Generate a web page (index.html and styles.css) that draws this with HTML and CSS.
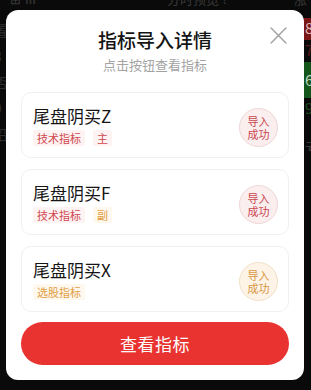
FILE: index.html
```html
<!DOCTYPE html>
<html lang="zh-CN">
<head>
<meta charset="utf-8">
<title>指标导入详情</title>
<link rel="stylesheet" href="styles.css">
</head>
<body>
<div class="backdrop">
  <div class="bg-top">
    <span class="bg-icons">⊞ ⅲ</span>
    <span class="bg-preview">分时预览 ?</span>
    <span class="bg-rise">涨</span>
  </div>
  <div class="bg-left">
    <span>置</span><span>3</span><span>否</span><span>9</span><span>沿</span>
  </div>
  <div class="bg-right">
    <span class="cell red">8</span>
    <span class="cell dred">7</span>
    <span class="cell green">6</span>
    <span class="cell dgreen">9</span>
    <span class="cell gray">亏</span>
  </div>

  <div class="modal">
    <header class="modal-head">
      <h1 class="title">指标导入详情</h1>
      <p class="subtitle">点击按钮查看指标</p>
      <button class="close" aria-label="关闭">
        <svg viewBox="0 0 16 16" width="17" height="17"><path d="M1 1 L15 15 M15 1 L1 15" stroke="#a3a3a3" stroke-width="1.4" fill="none" stroke-linecap="round"/></svg>
      </button>
    </header>

    <div class="list">
      <div class="card">
        <div class="info">
          <div class="name">尾盘阴买Z</div>
          <div class="tags">
            <span class="tag tag-red">技术指标</span>
            <span class="tag tag-red">主</span>
          </div>
        </div>
        <div class="badge badge-red"><span>导入</span><span>成功</span></div>
      </div>

      <div class="card">
        <div class="info">
          <div class="name">尾盘阴买F</div>
          <div class="tags">
            <span class="tag tag-red">技术指标</span>
            <span class="tag tag-orange">副</span>
          </div>
        </div>
        <div class="badge badge-red"><span>导入</span><span>成功</span></div>
      </div>

      <div class="card">
        <div class="info">
          <div class="name">尾盘阴买X</div>
          <div class="tags">
            <span class="tag tag-orange">选股指标</span>
          </div>
        </div>
        <div class="badge badge-orange"><span>导入</span><span>成功</span></div>
      </div>
    </div>

    <button class="primary">查看指标</button>
  </div>
</div>
</body>
</html>
```

FILE: styles.css
```css
* { box-sizing: border-box; }

html, body {
  margin: 0;
  padding: 0;
}

body {
  width: 311px;
  height: 390px;
  overflow: hidden;
  background: #0a0a0a;
  font-family: "Noto Sans CJK SC", "Noto Sans", sans-serif;
}

.backdrop {
  position: relative;
  width: 311px;
  height: 390px;
  overflow: hidden;
}

.bg-top {
  position: absolute;
  left: 0;
  top: -9px;
  width: 311px;
  display: flex;
  align-items: center;
  font-size: 13px;
  color: #3a3a3a;
  line-height: 16px;
}
.bg-icons { margin-left: 10px; }
.bg-preview { margin-left: 130px; }
.bg-rise { margin-left: auto; margin-right: 4px; }

.bg-left {
  position: absolute;
  left: -6px;
  top: 20px;
  display: flex;
  flex-direction: column;
  gap: 6px;
  font-size: 14px;
  line-height: 20px;
  color: #2e2e2e;
}

.bg-right {
  position: absolute;
  left: 303px;
  top: 18px;
  width: 14px;
  display: flex;
  flex-direction: column;
  font-size: 15px;
  line-height: 20px;
}
.cell { display: block; padding-left: 2px; }
.cell.red { background: #7a1616; color: #d9b5b5; height: 22px; }
.cell.dred { color: #5a1a1a; height: 22px; }
.cell.green { background: #15561c; color: #b9d3bb; height: 36px; line-height: 36px; }
.cell.dgreen { color: #1b4d20; height: 30px; }
.cell.gray { color: #3a3a3a; margin-top: 10px; }

.modal {
  position: absolute;
  left: 6px;
  top: 10px;
  width: 298px;
  height: 370px;
  background: #fff;
  border-radius: 12px;
  padding: 0 15px;
  display: flex;
  flex-direction: column;
}

.modal-head {
  position: relative;
  height: 82px;
  display: flex;
  flex-direction: column;
  align-items: center;
  padding-top: 17px;
}

.title {
  margin: 0;
  font-size: 19px;
  line-height: 26px;
  font-weight: 500;
  color: #141414;
}

.subtitle {
  margin: 0;
  margin-top: 3px;
  font-size: 13px;
  line-height: 18px;
  color: #a3a3a3;
}

.close {
  position: absolute;
  right: 1px;
  top: 16px;
  width: 19px;
  height: 19px;
  padding: 1px;
  border: 0;
  background: none;
  display: flex;
  align-items: center;
  justify-content: center;
}

.list {
  display: flex;
  flex-direction: column;
  gap: 11px;
}

.card {
  height: 66px;
  border: 1px solid #f0f0f0;
  border-radius: 10px;
  padding: 11px 10px 0 11px;
  display: flex;
  align-items: center;
  justify-content: space-between;
}

.info {
  display: flex;
  flex-direction: column;
  align-self: flex-start;
}

.name {
  font-size: 17px;
  line-height: 23px;
  color: #151515;
}

.tags {
  display: flex;
  gap: 8px;
  margin-top: 3px;
}

.tag {
  font-size: 11px;
  line-height: 16px;
  padding: 0 4px;
  border-radius: 2px;
}
.tag-red { color: #d0474e; background: #fef3f3; }
.tag-orange { color: #e29d42; background: #fef8ee; }

.badge {
  width: 39px;
  height: 39px;
  border-radius: 50%;
  display: flex;
  flex-direction: column;
  align-items: center;
  justify-content: center;
  font-size: 11px;
  line-height: 13px;
  margin-top: -6px;
}
.badge span { display: block; height: 13px; }
.badge-red { background: #fbeeee; border: 1px solid #efd6d6; color: #c9474e; }
.badge-orange { background: #fdf3e6; border: 1px solid #f2e0c8; color: #d9963f; }

.primary {
  margin-top: 10px;
  height: 43px;
  border: 0;
  border-radius: 22px;
  background: #e93330;
  color: #fff;
  font-family: inherit;
  font-size: 17px;
  line-height: 24px;
  letter-spacing: 0.5px;
}
```
